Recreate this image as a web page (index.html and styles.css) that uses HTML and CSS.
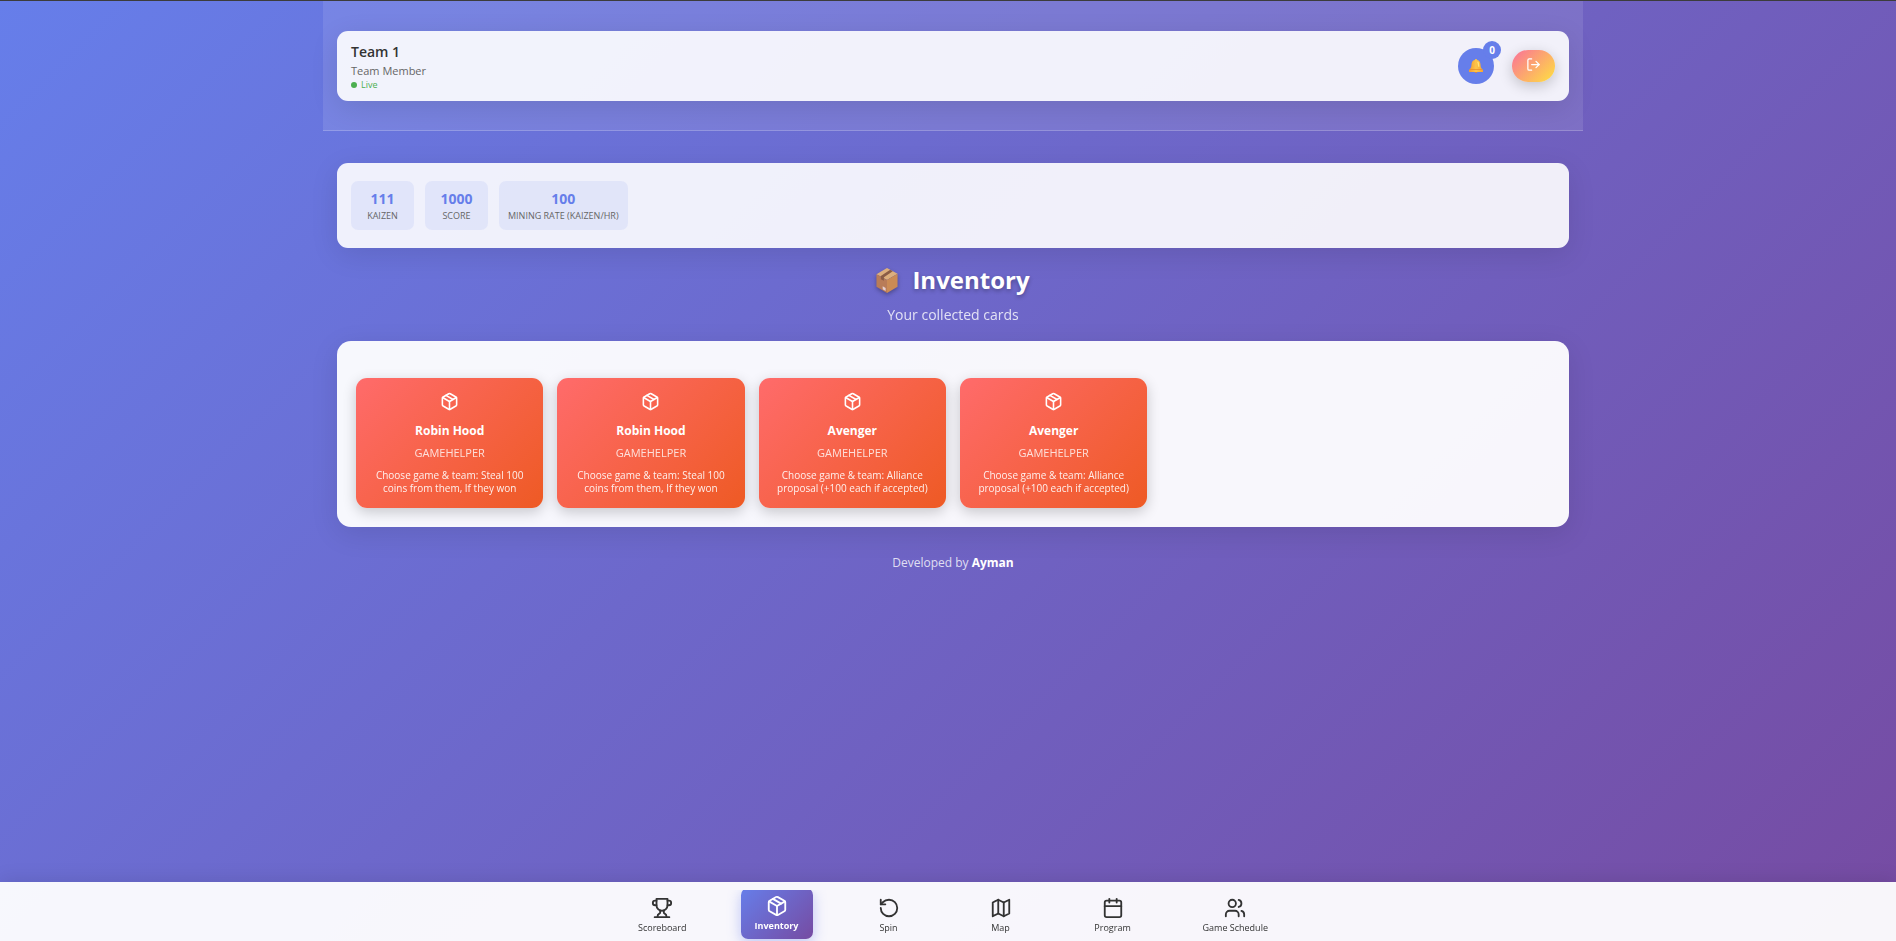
FILE: index.html
```html
<!DOCTYPE html>
<html lang="en">
<head>
<meta charset="utf-8">
<meta name="viewport" content="width=device-width, initial-scale=1">
<title>Inventory</title>
<link rel="stylesheet" href="styles.css">
</head>
<body>
<svg class="sprite" aria-hidden="true">
  <symbol id="package" viewBox="0 0 24 24"><path d="m7.5 4.27 9 5.15"/><path d="M21 8a2 2 0 0 0-1-1.73l-7-4a2 2 0 0 0-2 0l-7 4A2 2 0 0 0 3 8v8a2 2 0 0 0 1 1.73l7 4a2 2 0 0 0 2 0l7-4A2 2 0 0 0 21 16Z"/><path d="m3.3 7 8.7 5 8.7-5"/><path d="M12 22V12"/></symbol>
</svg>
<div class="app">
  <header class="header">
    <div class="panel user-bar">
      <div class="user">
        <h1 class="user-name">Team 1</h1>
        <p class="user-role">Team Member</p>
        <p class="live"><span class="live-dot"></span>Live</p>
      </div>
      <div class="actions">
        <button class="bell" type="button" aria-label="Notifications">
          <svg class="bell-icon" viewBox="0 0 14 14" aria-hidden="true">
            <defs><linearGradient id="gold" x1="0" x2="1"><stop offset="0" stop-color="#f59a2e"/><stop offset=".5" stop-color="#fdc54a"/><stop offset="1" stop-color="#f9a52f"/></linearGradient></defs>
            <circle cx="7" cy="12.6" r="1.4" fill="#e8892b"/>
            <path d="M7 0a1.2 1.2 0 0 0-1.2 1C3.6 1.5 2.6 3.300 2.500 5.500 2.400 8 1.800 9.300.6 10.300.1 10.800 0 11.200 0 11.800V13h14v-1.200c0-.6-.1-1-.6-1.500C12.200 9.300 11.600 8 11.500 5.500 11.400 3.300 10.400 1.500 8.200 1A1.200 1.200 0 0 0 7 0Z" fill="url(#gold)"/>
            <path d="M.6 10.500h12.800" stroke="#e58a2c" stroke-width=".7"/>
            <path d="M8.600 2.800c1 1 1 3 1.200 5" stroke="#ffe27a" stroke-width="1.300" fill="none"/>
          </svg>
          <span class="badge">0</span>
        </button>
        <button class="logout" type="button" aria-label="Log out">
          <svg class="icon logout-icon" viewBox="0 0 24 24" aria-hidden="true"><path d="M9 21H5a2 2 0 0 1-2-2V5a2 2 0 0 1 2-2h4"/><path d="m16 17 5-5-5-5"/><path d="M21 12H9"/></svg>
        </button>
      </div>
    </div>
  </header>

  <main class="main">
    <section class="panel stats" aria-label="Team stats">
      <div class="stat"><span class="stat-value">111</span><span class="stat-label">KAIZEN</span></div>
      <div class="stat"><span class="stat-value">1000</span><span class="stat-label">SCORE</span></div>
      <div class="stat"><span class="stat-value">100</span><span class="stat-label">MINING RATE (KAIZEN/HR)</span></div>
    </section>

    <div class="heading">
      <h2 class="title">
        <svg class="box-icon" viewBox="0 0 24 26" preserveAspectRatio="none" aria-hidden="true">
          <path d="M12 0 23.500 6 12 12.500.5 6.500Z" fill="#dcae7d"/>
          <path d="M.5 6.500 12 12.500V26L.5 19.500Z" fill="#b97c58"/>
          <path d="M23.500 6 12 12.500V26l11.500-6.500Z" fill="#cb8b55"/>
          <path d="m15.500 1.800 2.800 1.500L8.600 9.500v3.800L5.300 11.600V8.200Z" fill="#8a5c46"/>
          <path d="m7.300 19 3.200 1.700v3.200l-3.200-1.700Z" fill="#e6cfd0"/>
        </svg>
        Inventory
      </h2>
      <p class="subtitle">Your collected cards</p>
    </div>

    <section class="inventory" aria-label="Cards">
      <article class="card"><svg class="icon card-icon"><use href="#package"/></svg><h3 class="card-name">Robin Hood</h3><p class="card-type">GAMEHELPER</p><p class="card-text">Choose game &amp; team: Steal 100 coins from them, If they won</p></article>
      <article class="card"><svg class="icon card-icon"><use href="#package"/></svg><h3 class="card-name">Robin Hood</h3><p class="card-type">GAMEHELPER</p><p class="card-text">Choose game &amp; team: Steal 100 coins from them, If they won</p></article>
      <article class="card"><svg class="icon card-icon"><use href="#package"/></svg><h3 class="card-name">Avenger</h3><p class="card-type">GAMEHELPER</p><p class="card-text">Choose game &amp; team: Alliance proposal (+100 each if accepted)</p></article>
      <article class="card"><svg class="icon card-icon"><use href="#package"/></svg><h3 class="card-name">Avenger</h3><p class="card-type">GAMEHELPER</p><p class="card-text">Choose game &amp; team: Alliance proposal (+100 each if accepted)</p></article>
    </section>
  </main>

  <footer class="credit">Developed by <strong>Ayman</strong></footer>
</div>

<nav class="nav" aria-label="Main">
  <div class="nav-items">
    <a class="nav-item" href="#scoreboard"><svg class="icon nav-icon" viewBox="0 0 24 24"><path d="M6 9H4.500a2.500 2.500 0 0 1 0-5H6"/><path d="M18 9h1.500a2.500 2.500 0 0 0 0-5H18"/><path d="M4 22h16"/><path d="M10 14.660V17c0 .55-.47.98-.97 1.210C7.850 18.750 7 20.240 7 22"/><path d="M14 14.660V17c0 .55.47.98.97 1.210C16.150 18.750 17 20.240 17 22"/><path d="M18 2H6v7a6 6 0 0 0 12 0V2Z"/></svg>Scoreboard</a>
    <a class="nav-item active" href="#inventory" aria-current="page"><svg class="icon nav-icon"><use href="#package"/></svg>Inventory</a>
    <a class="nav-item" href="#spin"><svg class="icon nav-icon" viewBox="0 0 24 24"><path d="M3 12a9 9 0 1 0 9-9 9.750 9.750 0 0 0-6.740 2.740L3 8"/><path d="M3 3v5h5"/></svg>Spin</a>
    <a class="nav-item" href="#map"><svg class="icon nav-icon" viewBox="0 0 24 24"><path d="m3 6 6-3 6 3 6-3v15l-6 3-6-3-6 3Z"/><path d="M15 6v15"/><path d="M9 3v15"/></svg>Map</a>
    <a class="nav-item" href="#program"><svg class="icon nav-icon" viewBox="0 0 24 24"><path d="M8 2v4"/><path d="M16 2v4"/><rect width="18" height="18" x="3" y="4" rx="2"/><path d="M3 10h18"/></svg>Program</a>
    <a class="nav-item" href="#schedule"><svg class="icon nav-icon" viewBox="0 0 24 24"><path d="M16 21v-2a4 4 0 0 0-4-4H6a4 4 0 0 0-4 4v2"/><circle cx="9" cy="7" r="4"/><path d="M22 21v-2a4 4 0 0 0-3-3.870"/><path d="M16 3.130a4 4 0 0 1 0 7.750"/></svg>Game Schedule</a>
  </div>
</nav>
</body>
</html>
```

FILE: styles.css
```css
* { box-sizing: border-box; margin: 0; padding: 0; }

body {
  min-height: 100vh;
  padding-left: 10px;
  border-top: 1px solid #3c3c3c;
  background: linear-gradient(135deg, #667eea 0%, #764ba2 100%) fixed;
  font-family: "Open Sans", "Noto Sans", sans-serif;
  color: #333;
}

button { border: 0; font: inherit; cursor: pointer; }
.sprite { position: absolute; width: 0; height: 0; }
.icon { display: block; fill: none; stroke: currentColor; stroke-width: 2; stroke-linecap: round; stroke-linejoin: round; }

.app { max-width: 1260px; margin: 0 auto; padding-bottom: 80px; }

.header {
  padding: 30px 14px 29px;
  background: rgba(255, 255, 255, 0.1);
  border-bottom: 1px solid rgba(255, 255, 255, 0.2);
}

.panel {
  background: rgba(255, 255, 255, 0.9);
  border-radius: 11px;
  box-shadow: 0 7px 28px rgba(0, 0, 0, 0.1);
}

.user-bar { display: flex; align-items: center; justify-content: space-between; padding: 10px 14px; }
.user-name { font-size: 14px; line-height: 22px; font-weight: 600; }
.user-role { font-size: 11px; line-height: 15px; color: #666; }
.live { display: flex; align-items: center; gap: 4px; font-size: 9px; line-height: 13px; color: #4caf50; }
.live-dot { width: 6px; height: 6px; border-radius: 50%; background: #4caf50; }

.actions { display: flex; align-items: center; gap: 18px; }
.bell { position: relative; display: grid; place-items: center; width: 36px; height: 36px; border-radius: 50%; background: #667eea; }
.bell-icon { width: 14px; height: 14px; }
.badge {
  position: absolute; top: -7px; right: -7px;
  width: 18px; height: 18px; border-radius: 50%;
  background: #667eea; color: #fff;
  font-size: 10px; line-height: 18px; font-weight: 700; text-align: center;
}
.logout {
  display: grid; place-items: center;
  padding: 7px 14px 10px; border-radius: 22px;
  background: linear-gradient(135deg, #fa709a 0%, #fee140 100%);
  color: #fff;
  box-shadow: 0 4px 14px rgba(0, 0, 0, 0.2);
}
.logout-icon { width: 15px; height: 15px; }

.main { padding: 32px 14px 0; }
.stats { display: flex; flex-wrap: wrap; gap: 11px; padding: 18px 14px; }
.stat {
  display: flex; flex-direction: column; align-items: center;
  min-width: 63px; padding: 8px 9px 7px;
  border-radius: 7px; background: rgba(102, 126, 234, 0.1);
}
.stat-value { font-size: 14px; line-height: 20px; font-weight: 700; color: #667eea; }
.stat-label { font-size: 9px; line-height: 14px; color: #666; }

.heading { padding: 14px 0; text-align: center; color: #fff; }
.title {
  display: flex; align-items: center; justify-content: center; gap: 14px;
  font-size: 24px; line-height: 36px; font-weight: 700;
  text-shadow: 0 2px 4px rgba(0, 0, 0, 0.3);
}
.box-icon { width: 22px; height: 25px; filter: drop-shadow(0 2px 2px rgba(0, 0, 0, 0.3)); }
.subtitle { margin-top: 4px; font-size: 14px; line-height: 25px; opacity: 0.8; }

.inventory {
  display: grid; grid-template-columns: repeat(auto-fill, minmax(180px, 1fr)); gap: 14px;
  padding: 37px 19px 19px;
  border-radius: 14px;
  background: rgba(255, 255, 255, 0.95);
  box-shadow: 0 7px 28px rgba(0, 0, 0, 0.1);
}
.card {
  display: flex; flex-direction: column; align-items: center;
  padding: 14px 14px 13px;
  border-radius: 11px;
  background: linear-gradient(135deg, #ff6b6b 0%, #ee5a24 100%);
  box-shadow: 0 4px 14px rgba(0, 0, 0, 0.2);
  color: #fff; text-align: center;
}
.card-icon { width: 19px; height: 19px; }
.card-name { margin-top: 9px; font-size: 12px; line-height: 21px; font-weight: 700; }
.card-type { margin-top: 3px; font-size: 11px; line-height: 18px; opacity: 0.8; }
.card-text { margin-top: 7px; font-size: 10px; line-height: 13px; opacity: 0.9; }

.credit { padding: 26px 14px; text-align: center; font-size: 12px; line-height: 20px; color: rgba(255, 255, 255, 0.8); }
.credit strong { color: #fff; }

.nav {
  position: fixed; inset: auto 0 0;
  padding: 8px 0 0 10px;
  background: rgba(255, 255, 255, 0.95);
  box-shadow: 0 -2px 18px rgba(0, 0, 0, 0.1);
}
.nav-items { display: flex; justify-content: center; gap: 40px; overflow: hidden; }
.nav-item {
  display: flex; flex-direction: column; align-items: center; gap: 2px;
  min-width: 72px; padding: 7px 14px 6px;
  border-radius: 7px;
  color: #333; font-size: 9px; line-height: 14px; font-weight: 500; text-decoration: none;
}
.nav-icon { width: 22px; height: 22px; }
.nav-item.active {
  margin: -2px 0 2px;
  background: linear-gradient(135deg, #667eea 0%, #764ba2 100%);
  box-shadow: 0 4px 14px rgba(102, 126, 234, 0.4);
  color: #fff; font-weight: 700;
}
```
